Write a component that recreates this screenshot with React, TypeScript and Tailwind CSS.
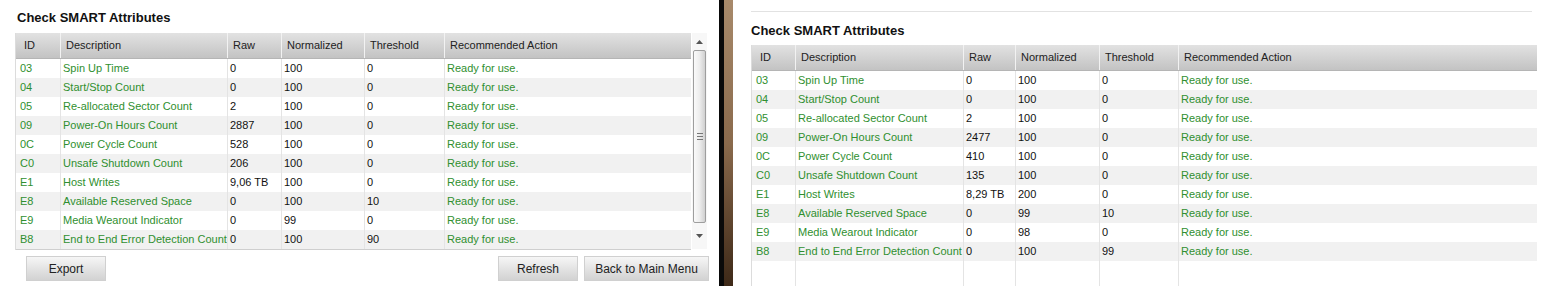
import React from 'react';

type Row = [string, string, string, string, string];

const LEFT_ROWS: Row[] = [
  ['03', 'Spin Up Time', '0', '100', '0'],
  ['04', 'Start/Stop Count', '0', '100', '0'],
  ['05', 'Re-allocated Sector Count', '2', '100', '0'],
  ['09', 'Power-On Hours Count', '2887', '100', '0'],
  ['0C', 'Power Cycle Count', '528', '100', '0'],
  ['C0', 'Unsafe Shutdown Count', '206', '100', '0'],
  ['E1', 'Host Writes', '9,06 TB', '100', '0'],
  ['E8', 'Available Reserved Space', '0', '100', '10'],
  ['E9', 'Media Wearout Indicator', '0', '99', '0'],
  ['B8', 'End to End Error Detection Count', '0', '100', '90'],
];

const RIGHT_ROWS: Row[] = [
  ['03', 'Spin Up Time', '0', '100', '0'],
  ['04', 'Start/Stop Count', '0', '100', '0'],
  ['05', 'Re-allocated Sector Count', '2', '100', '0'],
  ['09', 'Power-On Hours Count', '2477', '100', '0'],
  ['0C', 'Power Cycle Count', '410', '100', '0'],
  ['C0', 'Unsafe Shutdown Count', '135', '100', '0'],
  ['E1', 'Host Writes', '8,29 TB', '200', '0'],
  ['E8', 'Available Reserved Space', '0', '99', '10'],
  ['E9', 'Media Wearout Indicator', '0', '98', '0'],
  ['B8', 'End to End Error Detection Count', '0', '100', '99'],
];

const HEADERS = ['ID', 'Description', 'Raw', 'Normalized', 'Threshold', 'Recommended Action'];

function SmartTable({ rows, cols, filler }: { rows: Row[]; cols: string; filler?: boolean }) {
  return (
    <div className="shrink-0 border-l border-[#dcdcdc]">
      <div className={`grid ${cols} h-[26px] bg-gradient-to-b from-[#e2e2e2] to-[#c3c3c3] border-b border-[#b5b5b5]`}>
        {HEADERS.map((h, i) => (
          <div
            key={h}
            className={`leading-[25px] text-[11px] text-[#222] truncate ${i === 0 ? 'pl-2' : 'pl-[5px] border-l border-[#f2f2f2]'}`}
          >
            {h}
          </div>
        ))}
      </div>
      {rows.map((r, idx) => (
        <div key={r[0]} className={`grid ${cols} h-[19px] ${idx % 2 === 1 ? 'bg-[#f1f1f1]' : 'bg-white'}`}>
          <div className="pl-1 leading-[19px] text-[11px] text-[#2f8f2f]">{r[0]}</div>
          <div className="pl-[2px] leading-[19px] text-[11px] text-[#2f8f2f] border-l border-[#e4e4e4] whitespace-nowrap">{r[1]}</div>
          <div className="pl-[2px] leading-[19px] text-[11px] text-[#111] border-l border-[#e4e4e4] whitespace-nowrap">{r[2]}</div>
          <div className="pl-[2px] leading-[19px] text-[11px] text-[#111] border-l border-[#e4e4e4]">{r[3]}</div>
          <div className="pl-[2px] leading-[19px] text-[11px] text-[#111] border-l border-[#e4e4e4]">{r[4]}</div>
          <div className="pl-[2px] leading-[19px] text-[11px] text-[#2f8f2f] border-l border-[#e4e4e4]">Ready for use.</div>
        </div>
      ))}
      {filler ? (
        <div className={`grid ${cols} h-[30px]`}>
          <div />
          <div className="border-l border-[#e4e4e4]" />
          <div className="border-l border-[#e4e4e4]" />
          <div className="border-l border-[#e4e4e4]" />
          <div className="border-l border-[#e4e4e4]" />
          <div className="border-l border-[#e4e4e4]" />
        </div>
      ) : (
        <div className="border-b border-[#cfcfcf]" />
      )}
    </div>
  );
}

function Scrollbar() {
  return (
    <div className="w-[15px] h-[216px] flex flex-col items-center bg-[#f7f7f7]">
      <div className="h-[17px] flex items-center justify-center">
        <svg width="7" height="4" viewBox="0 0 7 4"><path d="M0 4 L3.5 0 L7 4 Z" fill="#555" /></svg>
      </div>
      <div className="w-[13px] h-[173px] rounded-[2px] border border-[#9e9e9e] bg-gradient-to-r from-[#fafafa] via-[#ededed] to-[#d0d0d0] flex flex-col items-center justify-center gap-[2px]">
        <div className="w-[6px] h-px bg-[#777]" />
        <div className="w-[6px] h-px bg-[#777]" />
        <div className="w-[6px] h-px bg-[#777]" />
      </div>
      <div className="flex-1 flex items-center justify-center">
        <svg width="7" height="4" viewBox="0 0 7 4"><path d="M0 0 L3.5 4 L7 0 Z" fill="#555" /></svg>
      </div>
    </div>
  );
}

function Button({ label, width }: { label: string; width: string }) {
  return (
    <div className={`${width} h-[25px] flex items-center justify-center text-[12px] text-[#222] bg-gradient-to-b from-[#f6f6f6] to-[#d2d2d2] border border-[#d0d0d0]`}>
      {label}
    </div>
  );
}

export default function App() {
  return (
    <div className="flex w-[1543px] h-[286px] overflow-hidden bg-white font-['Liberation_Sans',Arial,sans-serif]">
      <div className="w-[719px] shrink-0 pl-[15px] flex flex-col">
        <div className="shrink-0 h-[33px] pl-[2px] pt-[10px] text-[13px] font-bold leading-[16px] text-[#111]">Check SMART Attributes</div>
        <div className="shrink-0 flex">
          <div className="w-[676px]">
            <SmartTable rows={LEFT_ROWS} cols="grid-cols-[44px_167px_54px_83px_80px_247px]" />
          </div>
          <div className="ml-[1px]">
            <Scrollbar />
          </div>
        </div>
        <div className="shrink-0 flex mt-[6px] pl-[11px]">
          <Button label="Export" width="w-[80px]" />
          <div className="flex-1" />
          <Button label="Refresh" width="w-[80px]" />
          <div className="w-[6px]" />
          <Button label="Back to Main Menu" width="w-[125px]" />
          <div className="w-[10px]" />
        </div>
      </div>
      <div className="w-[5px] shrink-0 bg-[#0a0a0a]" />
      <div className="w-[9px] shrink-0 bg-gradient-to-b from-[#a88a6b] via-[#8a6a4c] to-[#3e2918]" />
      <div className="flex-1 pl-[18px] pr-[6px] flex flex-col">
        <div className="shrink-0 h-[12px] mr-[5px] border-b border-[#e2e2e2]" />
        <div className="shrink-0 h-[33px] pt-[11px] text-[13px] font-bold leading-[16px] text-[#111]">Check SMART Attributes</div>
        <SmartTable rows={RIGHT_ROWS} cols="grid-cols-[43px_168px_52px_84px_79px_359px]" filler />
      </div>
    </div>
  );
}
